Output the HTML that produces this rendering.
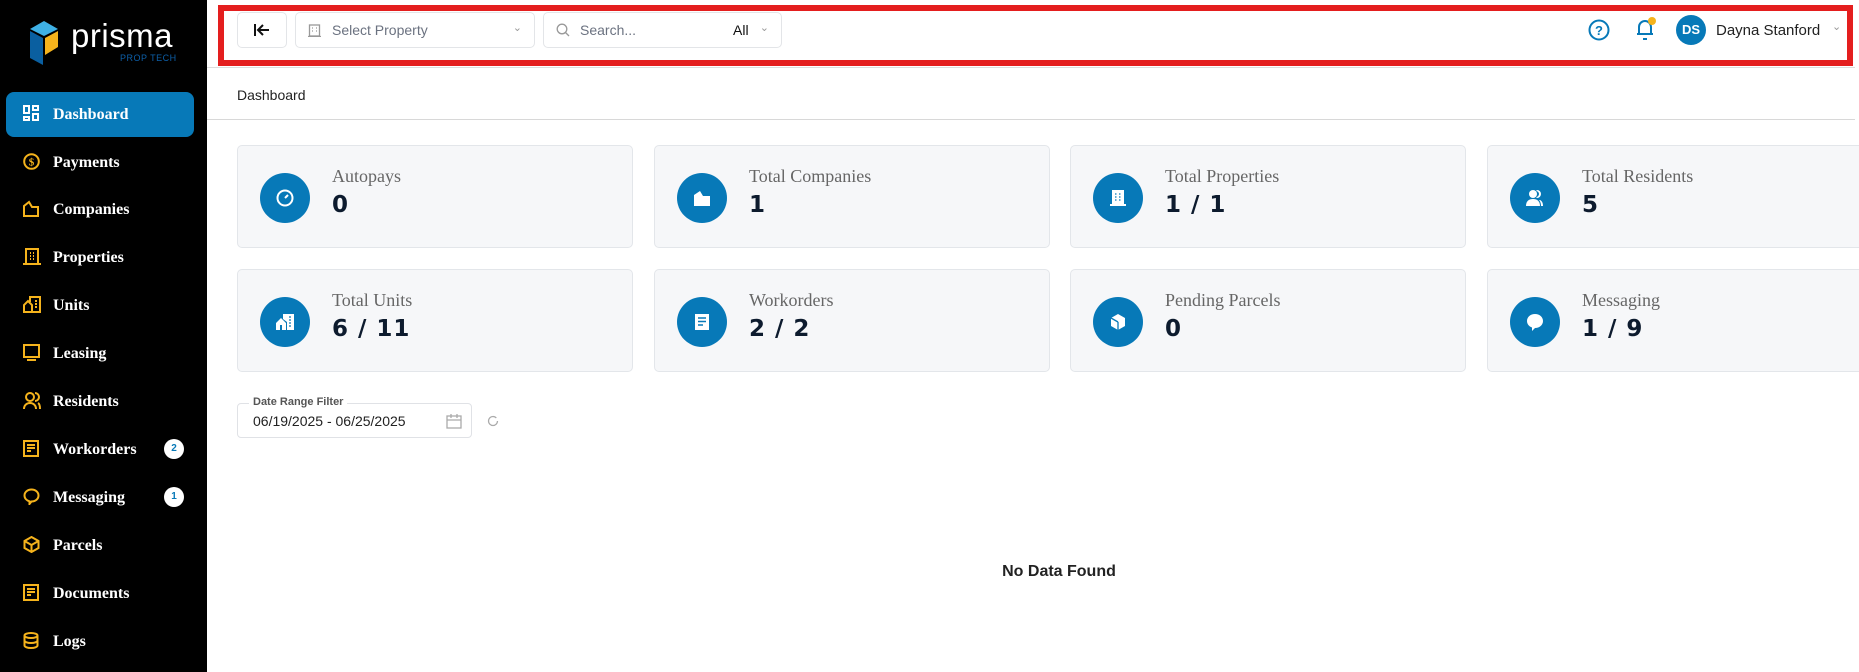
<!DOCTYPE html>
<html><head><meta charset="utf-8"><style>
*{box-sizing:border-box;margin:0;padding:0}
body{width:1859px;height:672px;overflow:hidden;background:#fff;font-family:"Liberation Sans",sans-serif;position:relative}
.sb{position:absolute;left:0;top:0;width:207px;height:672px;background:#000}
.item{position:absolute;left:6px;width:188px;height:45px;color:#fff;font-family:"Liberation Serif",serif;font-weight:bold;font-size:16px;display:flex;align-items:center;padding-left:47px}
.item svg{position:absolute;left:17px;top:13px}
.item.act{background:#0779b8;border-radius:8px}
.badge{position:absolute;left:158px;width:20px;height:20px;border-radius:50%;background:#fff;color:#0779b8;font-family:"Liberation Sans",sans-serif;font-size:10px;text-align:center;line-height:20px}
.red{position:absolute;left:218px;top:5px;width:1635px;height:61px;border:6px solid #e41e1e}
.btn{position:absolute;top:12px;height:36px;border:1px solid #e3e5e8;border-radius:5px;background:#fff;font-size:14px;color:#6b7280;display:flex;align-items:center}
.card{position:absolute;width:396px;height:103px;background:#f6f7f9;border:1px solid #e3e6ea;border-radius:5px}
.circ{position:absolute;left:22px;top:27px;width:50px;height:50px;border-radius:50%;background:#0779b8}
.circ svg{position:absolute;left:15px;top:15px}
.t{position:absolute;left:94px;top:20px;font-family:"Liberation Serif",serif;font-size:18px;color:#666}
.v{position:absolute;left:94px;top:46px;font-family:"DejaVu Sans",sans-serif;font-weight:bold;font-size:23px;color:#0d1b2e;letter-spacing:1px}
</style></head><body>
<div class="sb">
<svg style="position:absolute;left:29px;top:21px" width="30" height="45" viewBox="0 0 30 45"><polygon points="15,0 29,8 15,15 1,8" fill="#3fb1e5"/><polygon points="1,10 14,17 14,44 1,37" fill="#0a5fa0"/><polygon points="16,17 29,10 29,26 16,34" fill="#f5b31c"/></svg>
<div style="position:absolute;left:71px;top:17px;color:#fff;font-size:33px;letter-spacing:0.5px;font-family:'Liberation Sans',sans-serif">prisma</div>
<div style="position:absolute;left:120px;top:53px;color:#0d5fa8;font-size:9px;letter-spacing:0.5px">PROP TECH</div>
<div class="item act" style="top:92px"><svg width="16" height="16" viewBox="0 0 16 16" fill="none" stroke="#fff" stroke-width="2"><rect x="1" y="1" width="5" height="7"/><rect x="10" y="1" width="5" height="4"/><rect x="1" y="12" width="5" height="3"/><rect x="10" y="9" width="5" height="6"/></svg>Dashboard</div>
<div class="item" style="top:140px"><svg width="17" height="17" viewBox="0 0 17 17"><circle cx="8.5" cy="8.5" r="7.3" fill="none" stroke="#f5b31c" stroke-width="2"/><text x="8.5" y="12.5" font-size="11" text-anchor="middle" fill="#f5b31c" font-weight="bold">$</text></svg>Payments</div>
<div class="item" style="top:187px"><svg width="16" height="17" viewBox="0 0 16 17" fill="none" stroke="#f5b31c" stroke-width="2"><path d="M1 16V6l5-4 3 5h6v9z"/></svg>Companies</div>
<div class="item" style="top:235px"><svg width="18" height="17" viewBox="0 0 18 17" fill="none" stroke="#f5b31c" stroke-width="2"><rect x="3" y="1" width="12" height="15"/><path d="M0 16h18M7 5h1M10 5h1M7 8h1M10 8h1M7 11h1M10 11h1"/></svg>Properties</div>
<div class="item" style="top:283px"><svg width="18" height="17" viewBox="0 0 18 17" fill="none" stroke="#f5b31c" stroke-width="2"><path d="M1 16V9l4-4 4 4v7zM7 6V1h10v15H9M12 5h2M12 8h2M12 11h2"/></svg>Units</div>
<div class="item" style="top:331px"><svg width="17" height="17" viewBox="0 0 17 17" fill="none" stroke="#f5b31c" stroke-width="2"><rect x="1" y="1" width="15" height="12"/><path d="M4 16h9"/></svg>Leasing</div>
<div class="item" style="top:379px"><svg width="18" height="17" viewBox="0 0 18 17" fill="none" stroke="#f5b31c" stroke-width="2"><circle cx="7" cy="5" r="4"/><path d="M1 17c0-4 3-6 6-6s6 2 6 6M12 1a4 4 0 010 8M15 11c2 1 2 4 2 6"/></svg>Residents</div>
<div class="item" style="top:427px"><svg width="16" height="17" viewBox="0 0 16 17" fill="none" stroke="#f5b31c" stroke-width="2"><rect x="1" y="1" width="14" height="15"/><path d="M4 5h8M4 8h8M4 11h4"/></svg>Workorders<span class="badge" style="top:12px">2</span></div>
<div class="item" style="top:475px"><svg width="17" height="17" viewBox="0 0 17 17" fill="none" stroke="#f5b31c" stroke-width="2"><path d="M8.5 1.5c4 0 7 2.6 7 6s-3 6-7 6l-2 2.5v-2.7c-3-.8-5-3-5-5.8 0-3.4 3-6 7-6z"/></svg>Messaging<span class="badge" style="top:12px">1</span></div>
<div class="item" style="top:523px"><svg width="17" height="17" viewBox="0 0 17 17" fill="none" stroke="#f5b31c" stroke-width="2"><path d="M8.5 1l7 4v7l-7 4-7-4V5zM1.5 5l7 4 7-4M8.5 9v7"/></svg>Parcels</div>
<div class="item" style="top:571px"><svg width="16" height="17" viewBox="0 0 16 17" fill="none" stroke="#f5b31c" stroke-width="2"><rect x="1" y="1" width="14" height="15"/><path d="M4 5h8M4 8h8M4 11h4"/></svg>Documents</div>
<div class="item" style="top:619px"><svg width="16" height="17" viewBox="0 0 16 17" fill="none" stroke="#f5b31c" stroke-width="2"><ellipse cx="8" cy="3.5" rx="6.5" ry="2.5"/><path d="M1.5 3.5v10c0 1.4 3 2.5 6.5 2.5s6.5-1.1 6.5-2.5v-10M1.5 8.5c0 1.4 3 2.5 6.5 2.5s6.5-1.1 6.5-2.5"/></svg>Logs</div>
</div>

<div class="red"></div>
<div class="btn" style="left:237px;width:50px;justify-content:center"><svg width="18" height="14" viewBox="0 0 18 14" fill="none" stroke="#111" stroke-width="2"><path d="M2 1v12M16 7H6M10 2L5 7l5 5"/></svg></div>
<div class="btn" style="left:295px;width:240px;padding-left:12px"><svg width="13" height="13" viewBox="0 0 13 13" fill="none" stroke="#999" stroke-width="1.3"><rect x="1.5" y="1" width="10" height="11"/><path d="M4 4h1M8 4h1M4 7h1M8 7h1M0 12.5h13"/></svg><span style="margin-left:11px">Select Property</span><span style="position:absolute;right:12px;top:8px;font-size:11px;color:#999">&#8964;</span></div>
<div class="btn" style="left:543px;width:239px;padding-left:12px"><svg width="14" height="14" viewBox="0 0 14 14" fill="none" stroke="#999" stroke-width="1.3"><circle cx="6" cy="6" r="4.8"/><path d="M9.5 9.5L13 13"/></svg><span style="margin-left:10px">Search...</span><span style="position:absolute;left:189px;color:#111">All</span><span style="position:absolute;right:12px;top:8px;font-size:11px;color:#999">&#8964;</span></div>
<svg style="position:absolute;left:1588px;top:19px" width="22" height="22" viewBox="0 0 22 22"><circle cx="11" cy="11" r="9.5" fill="none" stroke="#0779b8" stroke-width="2"/><text x="11" y="16" font-size="13" font-weight="bold" text-anchor="middle" fill="#0779b8" font-family="Liberation Sans">?</text></svg>
<svg style="position:absolute;left:1633px;top:15px" width="26" height="26" viewBox="0 0 26 26" fill="none" stroke="#0779b8" stroke-width="2"><path d="M4 19h16M6 19v-7a6 6 0 0112 0v7M10 24h4"/><circle cx="19" cy="6" r="4" fill="#f5b31c" stroke="none"/></svg>
<div style="position:absolute;left:1676px;top:15px;width:30px;height:30px;border-radius:50%;background:#0779b8;color:#fff;font-weight:bold;font-size:13px;text-align:center;line-height:30px">DS</div>
<div style="position:absolute;left:1716px;top:22px;font-size:15px;color:#222">Dayna Stanford</div>
<div style="position:absolute;left:1832px;top:20px;font-size:11px;color:#999">&#8964;</div>
<div style="position:absolute;left:207px;top:67px;width:1648px;height:1px;background:#ddd"></div>
<div style="position:absolute;left:237px;top:87px;font-size:14px;color:#222">Dashboard</div>
<div style="position:absolute;left:207px;top:119px;width:1648px;height:1px;background:#d8d8d8"></div>

<div class="card" style="left:237px;top:145px"><div class="circ"><svg width="20" height="20" viewBox="0 0 20 20" fill="none" stroke="#fff" stroke-width="2"><circle cx="10" cy="10" r="7.5"/><path d="M10 10l3-3"/></svg></div><div class="t">Autopays</div><div class="v">0</div></div>
<div class="card" style="left:654px;top:145px"><div class="circ"><svg width="20" height="20" viewBox="0 0 20 20"><path d="M2 18V7l6-4 3 5h7v10z" fill="#fff"/></svg></div><div class="t">Total Companies</div><div class="v">1</div></div>
<div class="card" style="left:1070px;top:145px"><div class="circ"><svg width="20" height="20" viewBox="0 0 20 20"><rect x="4" y="2" width="12" height="15" fill="#fff"/><rect x="2" y="16" width="16" height="2" fill="#fff"/><path d="M7 6h1.5M11 6h1.5M7 9h1.5M11 9h1.5M7 12h1.5M11 12h1.5" stroke="#0779b8" stroke-width="1.3"/></svg></div><div class="t">Total Properties</div><div class="v">1 / 1</div></div>
<div class="card" style="left:1487px;top:145px"><div class="circ"><svg width="20" height="20" viewBox="0 0 20 20" fill="#fff"><circle cx="8" cy="6" r="4"/><path d="M1 18c0-5 3-7 7-7s7 2 7 7z"/><path d="M12 2a4 4 0 010 8l-1-1a3 3 0 000-6zM15 12c2 1 3 3 3 6h-2c0-3-1-5-2-6z"/></svg></div><div class="t">Total Residents</div><div class="v">5</div></div>
<div class="card" style="left:237px;top:269px"><div class="circ"><svg width="20" height="20" viewBox="0 0 20 20" fill="#fff"><path d="M1 18v-7l5-5 5 5v7zM8 7V2h11v16h-7v-8z"/><path d="M14 5h2M14 8h2M14 11h2M14 14h2" stroke="#0779b8" stroke-width="1.3"/><rect x="5" y="13" width="2" height="5" fill="#0779b8"/></svg></div><div class="t">Total Units</div><div class="v">6 / 11</div></div>
<div class="card" style="left:654px;top:269px"><div class="circ"><svg width="20" height="20" viewBox="0 0 20 20"><rect x="3" y="2" width="14" height="16" fill="#fff"/><path d="M6 6h8M6 9.5h8M6 13h5" stroke="#0779b8" stroke-width="1.6"/></svg></div><div class="t">Workorders</div><div class="v">2 / 2</div></div>
<div class="card" style="left:1070px;top:269px"><div class="circ"><svg width="20" height="20" viewBox="0 0 20 20"><path d="M10 2l7 4v8l-7 4-7-4V6z" fill="#fff"/><path d="M10 10v8M3 6l7 4" stroke="#0779b8" stroke-width="1.3"/></svg></div><div class="t">Pending Parcels</div><div class="v">0</div></div>
<div class="card" style="left:1487px;top:269px"><div class="circ"><svg width="20" height="20" viewBox="0 0 20 20"><path d="M10 2c4.5 0 8 3 8 7s-3.5 7-8 7l-3 3v-3.5C4 14.5 2 12 2 9c0-4 3.5-7 8-7z" fill="#fff"/></svg></div><div class="t">Messaging</div><div class="v">1 / 9</div></div>

<div style="position:absolute;left:237px;top:403px;width:235px;height:35px;border:1px solid #e0e2e6;border-radius:4px"></div>
<div style="position:absolute;left:249px;top:396px;padding:0 4px;background:#fff;font-size:11px;font-weight:bold;color:#555">Date Range Filter</div>
<div style="position:absolute;left:253px;top:413px;font-size:14px;color:#222">06/19/2025 - 06/25/2025</div>
<svg style="position:absolute;left:446px;top:413px" width="16" height="16" viewBox="0 0 16 16" fill="none" stroke="#aaa" stroke-width="1.3"><rect x="1" y="3" width="14" height="12"/><path d="M1 7h14M5 1v4M11 1v4"/></svg>
<svg style="position:absolute;left:487px;top:415px" width="12" height="12" viewBox="0 0 12 12" fill="none" stroke="#aaa" stroke-width="1.3"><path d="M10.5 6A4.5 4.5 0 116 1.5c1.5 0 2.5.6 3.3 1.5"/></svg>
<div style="position:absolute;left:959px;top:563px;width:200px;text-align:center;font-size:16px;font-weight:bold;color:#222">No Data Found</div>
</body></html>
